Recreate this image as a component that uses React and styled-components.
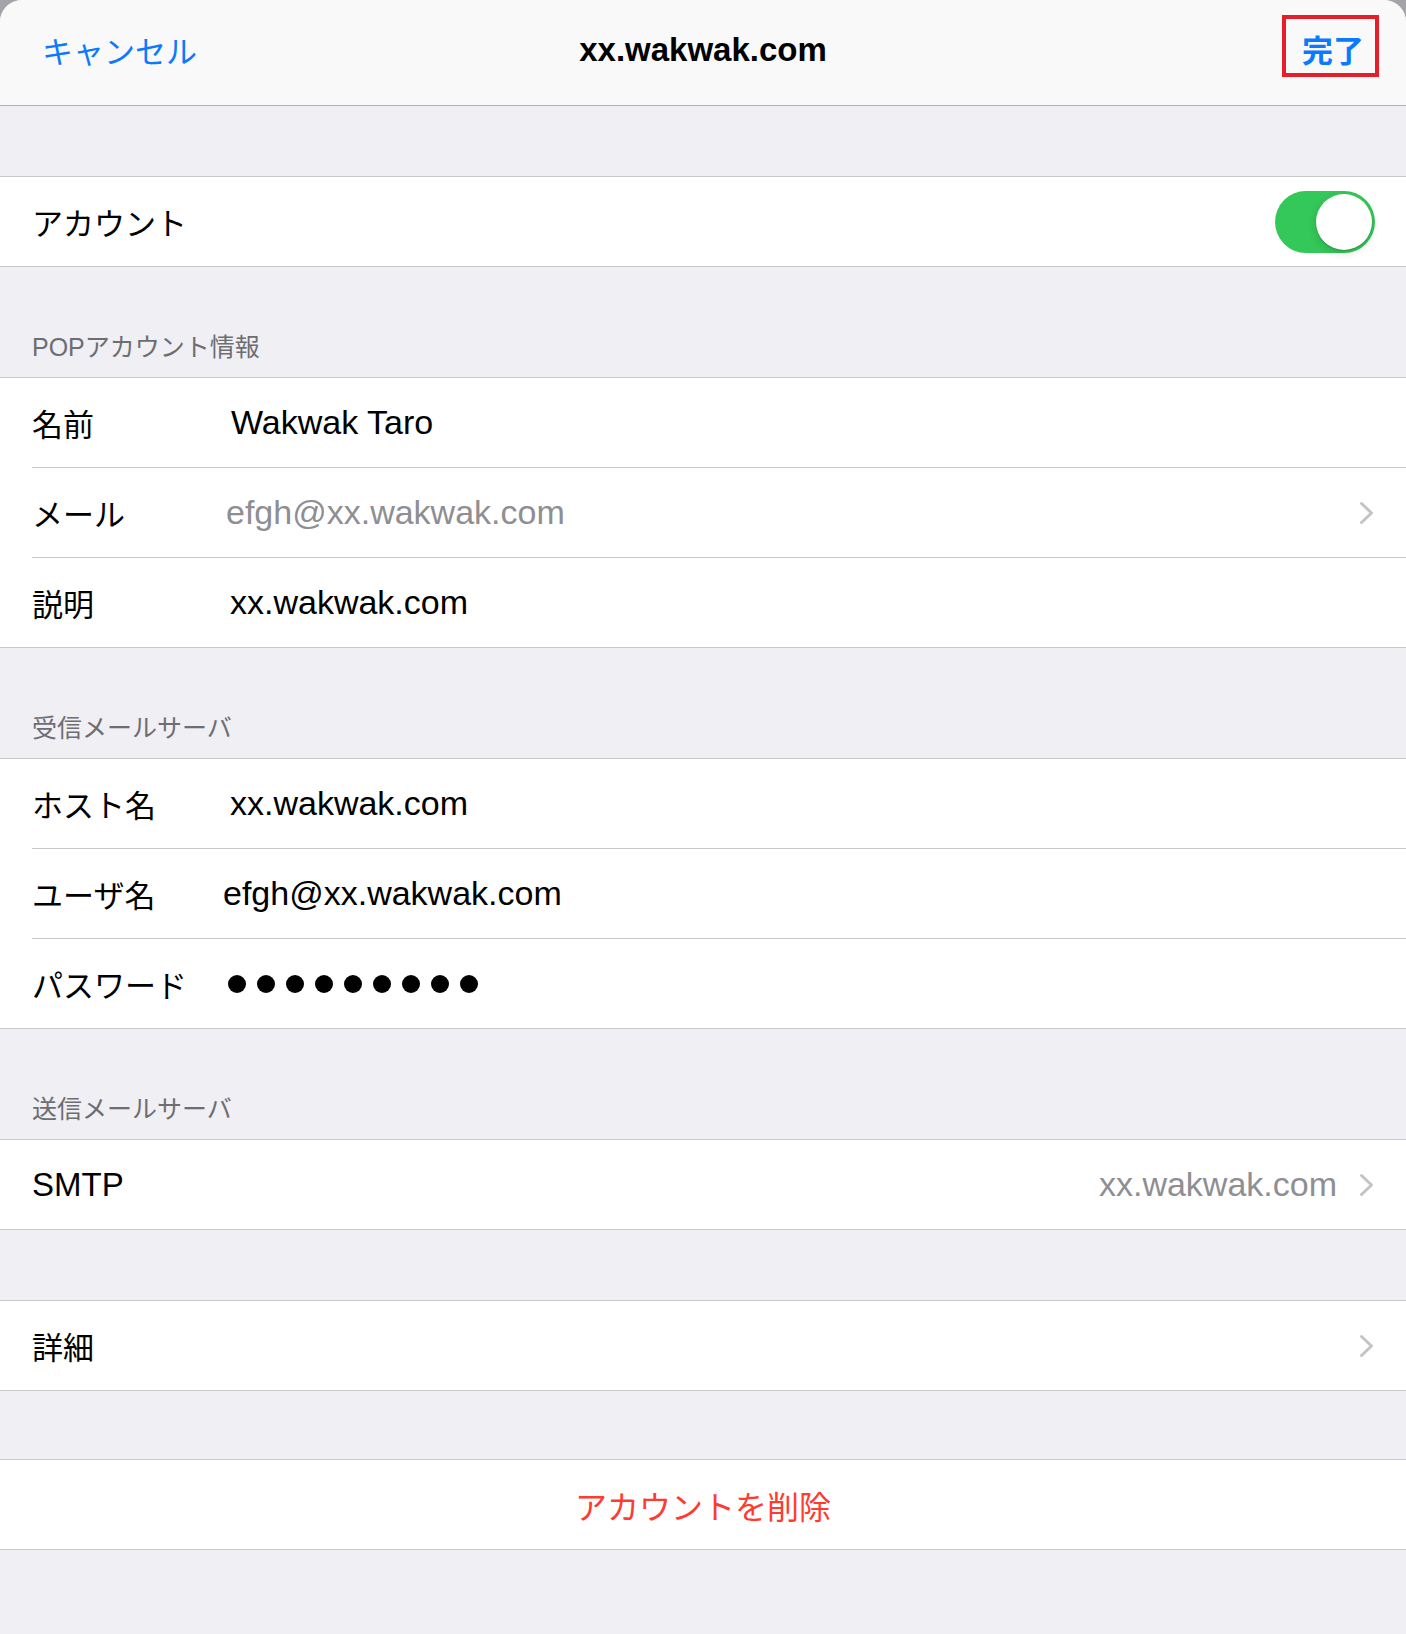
import React from 'react';
import styled, { createGlobalStyle } from 'styled-components';

const GlobalStyle = createGlobalStyle`
  html, body {
    margin: 0;
    padding: 0;
    background: #a4a4a8;
  }
  body {
    font-family: "Liberation Sans", "Noto Sans CJK JP", sans-serif;
    -webkit-font-smoothing: antialiased;
  }
`;

const Sheet = styled.div`
  min-height: 100vh;
  background: #efeff4;
  border-radius: 22px 22px 0 0;
  overflow: hidden;
`;

const NavBar = styled.header`
  height: 106px;
  box-sizing: border-box;
  padding: 0 27px 6px 27px;
  display: grid;
  grid-template-columns: 1fr auto 1fr;
  align-items: center;
  background: #f9f9f9;
  border-bottom: 1px solid #b2b2b5;
`;

const CancelButton = styled.button`
  justify-self: start;
  margin-left: 15px;
  padding: 0;
  border: none;
  background: none;
  font-family: inherit;
  font-size: 31px;
  color: #0a7aff;
`;

const Title = styled.h1`
  margin: 0;
  font-size: 33px;
  font-weight: 700;
  color: #000;
`;

const DoneButton = styled.button`
  justify-self: end;
  display: flex;
  align-items: center;
  height: 62px;
  margin-bottom: 8px;
  box-sizing: border-box;
  padding: 6px 11px 0 16px;
  border: 4px solid #e61e2a;
  background: none;
  font-family: inherit;
  font-size: 31px;
  font-weight: 700;
  color: #0a7aff;
`;

const Spacer = styled.div`
  height: ${(p) => p.$h || 70}px;
`;

const SectionHeader = styled.div`
  height: 110px;
  box-sizing: border-box;
  display: flex;
  align-items: flex-end;
  padding: 0 32px 16px;
  font-size: 25px;
  line-height: 28px;
  color: #6d6d72;
`;

const Group = styled.section`
  background: #fff;
  border-top: 1px solid #c8c7cc;
  border-bottom: 1px solid #c8c7cc;
`;

const Row = styled.div`
  display: flex;
  padding-left: 32px;
  & + & > div {
    border-top: 1px solid #c8c7cc;
  }
`;

const RowInner = styled.div`
  flex: 1;
  min-height: 89px;
  display: flex;
  align-items: center;
  justify-content: ${(p) => (p.$center ? 'center' : 'flex-start')};
  padding-right: 32px;
`;

const Label = styled.span`
  width: 196px;
  flex-shrink: 0;
  font-size: ${(p) => p.$size || 31}px;
  color: #000;
`;

const Value = styled.span`
  flex: 1;
  margin-left: ${(p) => p.$indent ?? 2}px;
  font-size: 34px;
  color: ${(p) => (p.$muted ? '#8e8e93' : '#000')};
`;

const Detail = styled.span`
  margin-left: auto;
  margin-right: 22px;
  font-size: 34px;
  color: #8e8e93;
`;

const DangerText = styled.span`
  font-size: 32px;
  color: #ff3b30;
`;

const Dots = styled.div`
  display: flex;
  gap: 11px;
`;

const Dot = styled.span`
  width: 18px;
  height: 18px;
  border-radius: 50%;
  background: #000;
`;

const Toggle = styled.div`
  margin-left: auto;
  margin-right: -1px;
  width: 100px;
  height: 62px;
  border-radius: 31px;
  background: #34c759;
  display: flex;
  align-items: center;
  justify-content: flex-end;
  padding: 0 3px;
  box-sizing: border-box;
`;

const Knob = styled.span`
  width: 56px;
  height: 56px;
  border-radius: 50%;
  background: #fff;
  box-shadow: 0 3px 8px rgba(0, 0, 0, 0.15), 0 1px 1px rgba(0, 0, 0, 0.16);
`;

const ChevronIcon = styled.svg`
  flex-shrink: 0;
  margin-left: ${(p) => (p.$auto ? 'auto' : '0')};
`;

const Chevron = ({ auto }) => (
  <ChevronIcon $auto={auto} width="15" height="24" viewBox="0 0 15 24">
    <path
      d="M2.5 2.5 L12.5 12 L2.5 21.5"
      fill="none"
      stroke="#c4c4c7"
      strokeWidth="3"
      strokeLinecap="round"
      strokeLinejoin="round"
    />
  </ChevronIcon>
);

export default function App() {
  return (
    <>
      <GlobalStyle />
      <Sheet>
        <NavBar>
          <CancelButton>キャンセル</CancelButton>
          <Title>xx.wakwak.com</Title>
          <DoneButton>完了</DoneButton>
        </NavBar>

        <Spacer $h={70} />
        <Group>
          <Row>
            <RowInner>
              <Label>アカウント</Label>
              <Toggle>
                <Knob />
              </Toggle>
            </RowInner>
          </Row>
        </Group>

        <SectionHeader>POPアカウント情報</SectionHeader>
        <Group>
          <Row>
            <RowInner>
              <Label>名前</Label>
              <Value $indent={3}>Wakwak Taro</Value>
            </RowInner>
          </Row>
          <Row>
            <RowInner>
              <Label>メール</Label>
              <Value $indent={-2} $muted>efgh@xx.wakwak.com</Value>
              <Chevron />
            </RowInner>
          </Row>
          <Row>
            <RowInner>
              <Label>説明</Label>
              <Value>xx.wakwak.com</Value>
            </RowInner>
          </Row>
        </Group>

        <SectionHeader>受信メールサーバ</SectionHeader>
        <Group>
          <Row>
            <RowInner>
              <Label>ホスト名</Label>
              <Value>xx.wakwak.com</Value>
            </RowInner>
          </Row>
          <Row>
            <RowInner>
              <Label>ユーザ名</Label>
              <Value $indent={-5}>efgh@xx.wakwak.com</Value>
            </RowInner>
          </Row>
          <Row>
            <RowInner>
              <Label>パスワード</Label>
              <Dots>
                {Array.from({ length: 9 }).map((_, i) => (
                  <Dot key={i} />
                ))}
              </Dots>
            </RowInner>
          </Row>
        </Group>

        <SectionHeader>送信メールサーバ</SectionHeader>
        <Group>
          <Row>
            <RowInner>
              <Label $size={33}>SMTP</Label>
              <Detail>xx.wakwak.com</Detail>
              <Chevron />
            </RowInner>
          </Row>
        </Group>

        <Spacer $h={70} />
        <Group>
          <Row>
            <RowInner>
              <Label>詳細</Label>
              <Chevron auto />
            </RowInner>
          </Row>
        </Group>

        <Spacer $h={68} />
        <Group>
          <Row>
            <RowInner $center>
              <DangerText>アカウントを削除</DangerText>
            </RowInner>
          </Row>
        </Group>
      </Sheet>
    </>
  );
}
